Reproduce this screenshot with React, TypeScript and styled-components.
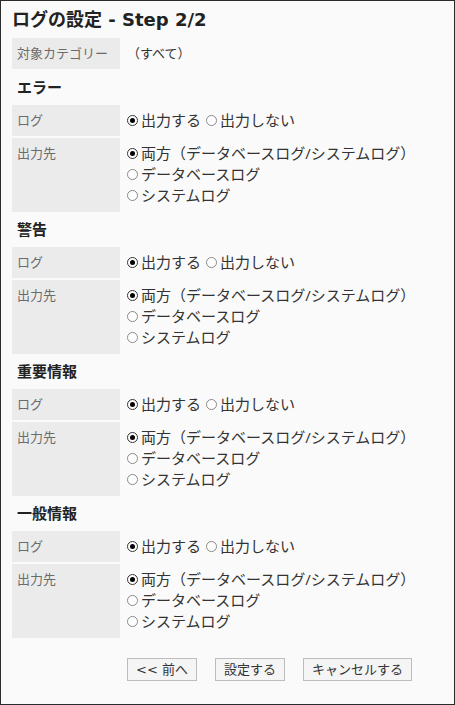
import React, { FC } from 'react';
import styled, { createGlobalStyle } from 'styled-components';

const GlobalStyle = createGlobalStyle`
  html, body {
    margin: 0;
    padding: 0;
    background: #fafafa;
  }
  * {
    box-sizing: border-box;
  }
`;

const Page = styled.div`
  width: 455px;
  height: 705px;
  border: 1px solid #2b2b2b;
  background: #fafafa;
  padding: 8px 11px 0 11px;
  font-family: "Open Sans", "Noto Sans CJK JP", sans-serif;
  color: #333;
`;

const Title = styled.h1`
  margin: 0 0 7px 0;
  font-family: "DejaVu Sans", "Noto Sans CJK JP", sans-serif;
  font-size: 18px;
  line-height: 22px;
  font-weight: 700;
  color: #222;
`;

const Grid = styled.div`
  display: grid;
  grid-template-columns: 108px 1fr;
  row-gap: 2px;
  column-gap: 2px;
`;

const Label = styled.div`
  background: #ebebeb;
  color: #6b6b6b;
  font-size: 13px;
  line-height: 21px;
  padding: 5px 5px;
`;

const Value = styled.div<{ $multi?: boolean; $small?: boolean }>`
  font-size: ${(p) => (p.$small ? '13px' : '15px')};
  line-height: 21px;
  padding: ${(p) => (p.$multi ? '5px 5px 6px 5px' : '5px 5px')};
  color: #333;
`;

const SectionTitle = styled.div<{ $first?: boolean }>`
  font-size: 15px;
  font-weight: 700;
  color: #222;
  padding-left: 5px;
  height: ${(p) => (p.$first ? '36px' : '35px')};
  line-height: ${(p) => (p.$first ? '36px' : '35px')};
`;

const OptionLine = styled.div`
  display: flex;
  align-items: center;
  height: 21px;
  white-space: nowrap;
`;

const RadioDot = styled.span<{ $on?: boolean }>`
  display: inline-block;
  position: relative;
  width: 11px;
  height: 11px;
  border-radius: 50%;
  border: 1px solid ${(p) => (p.$on ? '#333' : '#8a8a8a')};
  background: #fff;
  margin-right: 3px;
  flex: 0 0 auto;

  &::after {
    content: '';
    display: ${(p) => (p.$on ? 'block' : 'none')};
    position: absolute;
    left: 2px;
    top: 2px;
    width: 5px;
    height: 5px;
    border-radius: 50%;
    background: #000;
  }
`;

const Choice = styled.span`
  display: inline-flex;
  align-items: center;
  margin-right: 5px;
`;

const Buttons = styled.div`
  display: flex;
  gap: 18px;
  margin-top: 20px;
  padding-left: 115px;
`;

const Button = styled.button`
  height: 23px;
  padding: 0 8px;
  border: 1px solid #bdbdbd;
  background: #f5f5f5;
  color: #333;
  font-family: "DejaVu Sans", "Noto Sans CJK JP", sans-serif;
  font-size: 13px;
  line-height: 21px;
  cursor: pointer;
`;

interface ISectionProps {
  title: string;
  first?: boolean;
}

const Section: FC<ISectionProps> = ({ title, first }) => (
  <>
    <SectionTitle $first={first}>{title}</SectionTitle>
    <Grid>
      <Label>ログ</Label>
      <Value>
        <OptionLine>
          <Choice>
            <RadioDot $on />
            出力する
          </Choice>
          <Choice>
            <RadioDot />
            出力しない
          </Choice>
        </OptionLine>
      </Value>
      <Label>出力先</Label>
      <Value $multi>
        <OptionLine>
          <RadioDot $on />
          両方（データベースログ/システムログ）
        </OptionLine>
        <OptionLine>
          <RadioDot />
          データベースログ
        </OptionLine>
        <OptionLine>
          <RadioDot />
          システムログ
        </OptionLine>
      </Value>
    </Grid>
  </>
);

const App: FC = () => {
  const sections = ['エラー', '警告', '重要情報', '一般情報'];

  return (
    <>
      <GlobalStyle />
      <Page>
        <Title>ログの設定 - Step 2/2</Title>
        <Grid>
          <Label>対象カテゴリー</Label>
          <Value $small>（すべて）</Value>
        </Grid>
        {sections.map((s, i) => (
          <Section key={s} title={s} first={i === 0} />
        ))}
        <Buttons>
          <Button>&lt;&lt; 前へ</Button>
          <Button>設定する</Button>
          <Button>キャンセルする</Button>
        </Buttons>
      </Page>
    </>
  );
};

export default App;
